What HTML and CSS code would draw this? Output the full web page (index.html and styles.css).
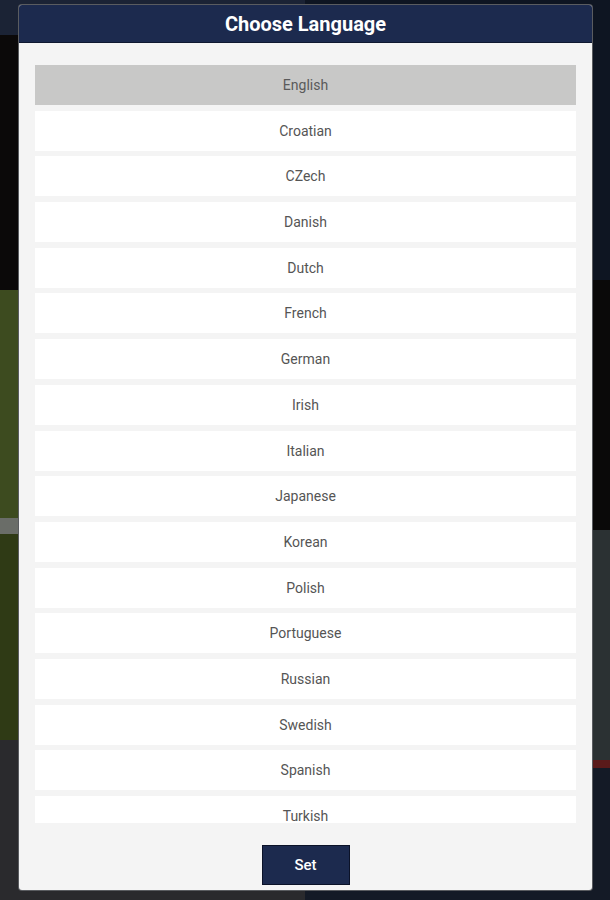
FILE: index.html
```html
<!DOCTYPE html>
<html>
<head>
<meta charset="utf-8">
<link rel="stylesheet" href="styles.css">
</head>
<body>
<div class="backdrop">
  <div class="modal">
    <div class="modal-header">Choose Language</div>
    <div class="lang-list">
      <div class="lang-item selected">English</div>
      <div class="lang-item">Croatian</div>
      <div class="lang-item">CZech</div>
      <div class="lang-item">Danish</div>
      <div class="lang-item">Dutch</div>
      <div class="lang-item">French</div>
      <div class="lang-item">German</div>
      <div class="lang-item">Irish</div>
      <div class="lang-item">Italian</div>
      <div class="lang-item">Japanese</div>
      <div class="lang-item">Korean</div>
      <div class="lang-item">Polish</div>
      <div class="lang-item">Portuguese</div>
      <div class="lang-item">Russian</div>
      <div class="lang-item">Swedish</div>
      <div class="lang-item">Spanish</div>
      <div class="lang-item">Turkish</div>
    </div>
    <div class="modal-footer">
      <button class="set-btn">Set</button>
    </div>
  </div>
</div>
</body>
</html>
```

FILE: styles.css
```css
html, body {
  margin: 0;
  padding: 0;
  width: 610px;
  height: 900px;
  overflow: hidden;
  font-family: Roboto, "Liberation Sans", sans-serif;
}

.backdrop {
  width: 610px;
  height: 900px;
  box-sizing: border-box;
  padding: 5px 18px 0 19px;
  background-color: #101318;
  background-image:
    linear-gradient(to bottom, #1b2335 0, #1b2335 35px, #0b0909 35px, #0b0909 290px, #3d4b1f 290px, #3d4b1f 518px, #6a6d68 518px, #6a6d68 534px, #2f3a15 534px, #2f3a15 740px, #2a2a2d 740px, #2a2a2d 900px),
    linear-gradient(to bottom, #0e1522 0, #0e1522 280px, #0a0909 280px, #0a0909 530px, #2b3133 530px, #2b3133 760px, #5a1a1a 760px, #5a1a1a 768px, #141a26 768px, #141a26 900px),
    linear-gradient(to right, #111 0, #1a1a1a 100%);
  background-size: 305px 900px, 305px 900px, 610px 900px;
  background-position: 0 0, 305px 0, 0 0;
  background-repeat: no-repeat;
}

.modal {
  width: 573px;
  height: 885px;
  background: #f4f4f4;
  border-radius: 3px;
  box-shadow: 0 0 0 1px #5a5c60;
  display: flex;
  flex-direction: column;
  overflow: hidden;
}

.modal-header {
  height: 38px;
  flex: 0 0 38px;
  box-sizing: border-box;
  background: #1c2a4e;
  color: #ffffff;
  font-weight: 700;
  font-size: 20px;
  display: flex;
  align-items: center;
  justify-content: center;
  border-bottom: 1px solid #0f1830;
}

.lang-list {
  margin: 22px 16px 0 16px;
  height: 758px;
  flex: 0 0 758px;
  overflow: hidden;
  display: flex;
  flex-direction: column;
  gap: 5.7px;
}

.lang-item {
  flex: 0 0 40px;
  height: 40px;
  background: #ffffff;
  color: #555555;
  font-size: 14px;
  display: flex;
  align-items: center;
  justify-content: center;
}

.lang-item.selected {
  background: #c8c8c7;
  color: #5a5a5a;
}

.modal-footer {
  display: flex;
  justify-content: center;
  padding-top: 22px;
}

.set-btn {
  width: 88px;
  height: 40px;
  background: #1c2a4e;
  border: 1px solid #0b1228;
  color: #ffffff;
  font-family: Roboto, "Liberation Sans", sans-serif;
  font-size: 15px;
  font-weight: 500;
  padding: 0;
}
```
